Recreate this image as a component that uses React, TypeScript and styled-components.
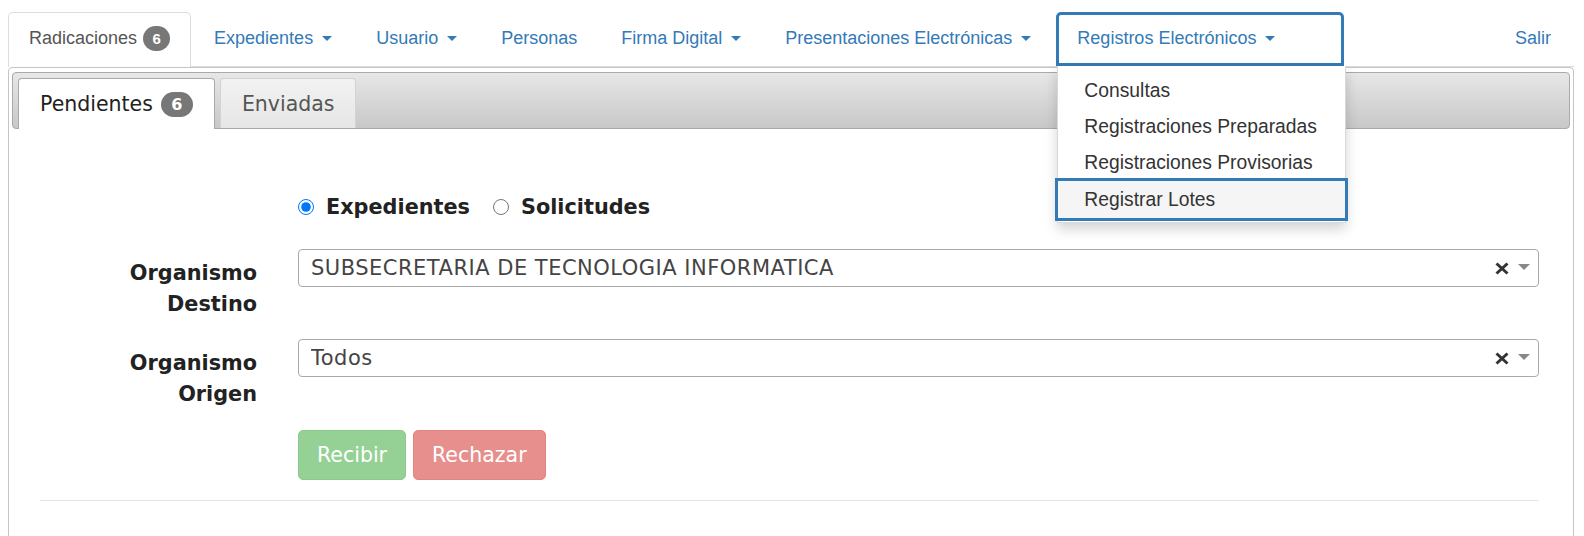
import styled, { createGlobalStyle } from "styled-components";

const GlobalStyle = createGlobalStyle`
  html, body {
    margin: 0;
    padding: 0;
    background: #fff;
  }
  body {
    font-family: "Liberation Sans", Arial, sans-serif;
    color: #333;
  }
  * {
    box-sizing: border-box;
  }
`;

const Page = styled.div`
  padding: 12px 10px 0 8px;
  height: 536px;
  overflow: hidden;
`;

const NavTabs = styled.ul`
  list-style: none;
  margin: 0;
  padding: 0;
  display: flex;
  height: 55px;
  border-bottom: 1px solid #ddd;
  font-size: 18px;
  position: relative;
  z-index: 2;
`;

const NavItem = styled.li<{ $active?: boolean; $focused?: boolean; $right?: boolean }>`
  position: relative;
  display: flex;
  align-items: center;
  padding: 0 20px 3px;
  margin-right: 2px;
  margin-bottom: -1px;
  border: 1px solid transparent;
  border-bottom: none;
  border-radius: 5px 5px 0 0;
  color: #337ab7;
  white-space: nowrap;
  cursor: pointer;
  ${(p) =>
    p.$active &&
    `
    border-color: #ddd;
    background: #fff;
    color: #555;
  `}
  ${(p) =>
    p.$focused &&
    `
    min-width: 288px;
    margin-left: 2px;
    outline: 3px solid #337ab7;
    outline-offset: -3px;
    margin-bottom: 0;
  `}
  ${(p) => p.$right && `margin-left: auto;`}
`;

const Caret = styled.span`
  display: inline-block;
  width: 0;
  height: 0;
  margin-left: 9px;
  border-top: 5px solid currentColor;
  border-left: 5px solid transparent;
  border-right: 5px solid transparent;
`;

const NavBadge = styled.span`
  display: inline-flex;
  align-items: center;
  justify-content: center;
  margin-left: 6px;
  min-width: 27px;
  height: 25px;
  padding: 0 8px;
  border-radius: 13px;
  background: #777;
  color: #fff;
  font-size: 15px;
  font-weight: bold;
`;

const DropdownMenu = styled.ul`
  position: absolute;
  top: 100%;
  left: 0;
  width: 289px;
  margin: 0;
  padding: 7px 0 4px;
  list-style: none;
  background: #fff;
  border: 1px solid rgba(0, 0, 0, 0.15);
  border-top: none;
  box-shadow: 0 6px 12px rgba(0, 0, 0, 0.175);
  font-size: 19.3px;
`;

const MenuItem = styled.li<{ $highlight?: boolean }>`
  height: 36px;
  display: flex;
  align-items: center;
  padding: 0 26px;
  color: #333;
  ${(p) =>
    p.$highlight &&
    `
    height: 37px;
    background: #f5f5f5;
    outline: 3px solid #337ab7;
  `}
`;

const Panel = styled.div`
  border: 1px solid #c5c5c5;
  border-radius: 4px;
  padding: 4px 3px 3px;
  height: 520px;
  font-family: "DejaVu Sans", Verdana, sans-serif;
`;

const TabHeader = styled.div`
  display: flex;
  align-items: flex-end;
  gap: 5px;
  height: 57px;
  padding: 5px 5px 0;
  border: 1px solid #aaa;
  border-radius: 4px;
  background: linear-gradient(#e7e7e7, #c8c8c8);
`;

const Tab = styled.div<{ $active?: boolean }>`
  display: flex;
  align-items: center;
  align-self: flex-start;
  height: 50px;
  padding: 0 21px;
  border: 1px solid #d3d3d3;
  border-bottom: none;
  border-radius: 4px 4px 0 0;
  background: linear-gradient(#f2f2f2, #e6e6e6);
  color: #555;
  font-size: 20.5px;
  ${(p) =>
    p.$active &&
    `
    height: 51px;
    margin-bottom: -1px;
    border-color: #aaa;
    background: #fff;
    color: #212121;
  `}
`;

const TabBadge = styled.span`
  display: inline-flex;
  align-items: center;
  justify-content: center;
  margin-left: 8px;
  min-width: 32px;
  height: 25px;
  padding: 0 10px;
  border-radius: 13px;
  background: #777;
  color: #fff;
  font-size: 16px;
  font-weight: bold;
`;

const Content = styled.div`
  padding: 62px 31px 0 28px;
  color: #222;
  font-size: 20.8px;
`;

const FormRow = styled.div<{ $mb?: number }>`
  display: grid;
  grid-template-columns: 217px 1fr;
  column-gap: 41px;
  align-items: start;
  margin-bottom: ${(p) => p.$mb ?? 0}px;
`;

const FieldLabel = styled.div`
  text-align: right;
  font-weight: bold;
  line-height: 31px;
  padding-top: 9px;
`;

const RadioGroup = styled.div`
  display: flex;
  align-items: center;
  gap: 23px;
  height: 31px;
`;

const RadioOption = styled.label`
  display: flex;
  align-items: center;
  font-weight: bold;
  cursor: pointer;
`;

const Radio = styled.input`
  width: 16px;
  height: 16px;
  margin: 0 12px 0 0;
  accent-color: #0075ff;
`;

const Select = styled.div`
  display: flex;
  align-items: center;
  height: 38px;
  padding: 0 8px 0 12px;
  border: 1px solid #aaa;
  border-radius: 4px;
  color: #444;
  font-size: 21px;
  letter-spacing: 0.5px;
`;

const SelectValue = styled.span`
  flex: 1;
  white-space: nowrap;
  overflow: hidden;
`;

const ClearIcon = styled.svg`
  width: 14px;
  height: 13px;
  margin-right: 9px;
`;

const ArrowIcon = styled.svg`
  width: 12px;
  height: 6px;
  margin-bottom: 3px;
`;

const ButtonRow = styled.div`
  display: flex;
  gap: 7px;
`;

const Button = styled.button<{ $variant: "success" | "danger" }>`
  height: 50px;
  padding: 0 18px;
  border-radius: 5px;
  border: 1px solid ${(p) => (p.$variant === "success" ? "#8bcb8b" : "#e3827f")};
  background: ${(p) => (p.$variant === "success" ? "#95d195" : "#e68f8c")};
  color: #fff;
  font-family: "DejaVu Sans", Verdana, sans-serif;
  font-size: 20.5px;
`;

const Divider = styled.hr`
  margin: 20px 0 0;
  border: 0;
  border-top: 1px solid #e5e5e5;
`;

function SelectBox({ value }: { value: string }) {
  return (
    <Select>
      <SelectValue>{value}</SelectValue>
      <ClearIcon viewBox="0 0 14 13">
        <path d="M1.5 1.5 L12.5 11.5 M12.5 1.5 L1.5 11.5" stroke="#333" strokeWidth="3" />
      </ClearIcon>
      <ArrowIcon viewBox="0 0 12 6">
        <path d="M0 0 H12 L6 6 Z" fill="#888" />
      </ArrowIcon>
    </Select>
  );
}

const navLinks = [
  { label: "Expedientes", caret: true },
  { label: "Usuario", caret: true },
  { label: "Personas", caret: false },
  { label: "Firma Digital", caret: true },
  { label: "Presentaciones Electrónicas", caret: true },
];

const registrosMenu = [
  "Consultas",
  "Registraciones Preparadas",
  "Registraciones Provisorias",
  "Registrar Lotes",
];

export default function App() {
  return (
    <>
      <GlobalStyle />
      <Page>
        <NavTabs>
          <NavItem $active>
            Radicaciones <NavBadge>6</NavBadge>
          </NavItem>
          {navLinks.map((link) => (
            <NavItem key={link.label}>
              {link.label}
              {link.caret && <Caret />}
            </NavItem>
          ))}
          <NavItem $focused>
            Registros Electrónicos
            <Caret />
            <DropdownMenu>
              {registrosMenu.map((item, i) => (
                <MenuItem key={item} $highlight={i === registrosMenu.length - 1}>
                  {item}
                </MenuItem>
              ))}
            </DropdownMenu>
          </NavItem>
          <NavItem $right>Salir</NavItem>
        </NavTabs>

        <Panel>
          <TabHeader>
            <Tab $active>
              Pendientes <TabBadge>6</TabBadge>
            </Tab>
            <Tab>Enviadas</Tab>
          </TabHeader>

          <Content>
            <FormRow $mb={27}>
              <div />
              <RadioGroup>
                <RadioOption>
                  <Radio type="radio" name="tipo" defaultChecked />
                  Expedientes
                </RadioOption>
                <RadioOption>
                  <Radio type="radio" name="tipo" />
                  Solicitudes
                </RadioOption>
              </RadioGroup>
            </FormRow>

            <FormRow $mb={19}>
              <FieldLabel>
                Organismo
                <br />
                Destino
              </FieldLabel>
              <SelectBox value="SUBSECRETARIA DE TECNOLOGIA INFORMATICA" />
            </FormRow>

            <FormRow $mb={20}>
              <FieldLabel>
                Organismo
                <br />
                Origen
              </FieldLabel>
              <SelectBox value="Todos" />
            </FormRow>

            <FormRow>
              <div />
              <ButtonRow>
                <Button $variant="success">Recibir</Button>
                <Button $variant="danger">Rechazar</Button>
              </ButtonRow>
            </FormRow>
            <Divider />
          </Content>
        </Panel>
      </Page>
    </>
  );
}
